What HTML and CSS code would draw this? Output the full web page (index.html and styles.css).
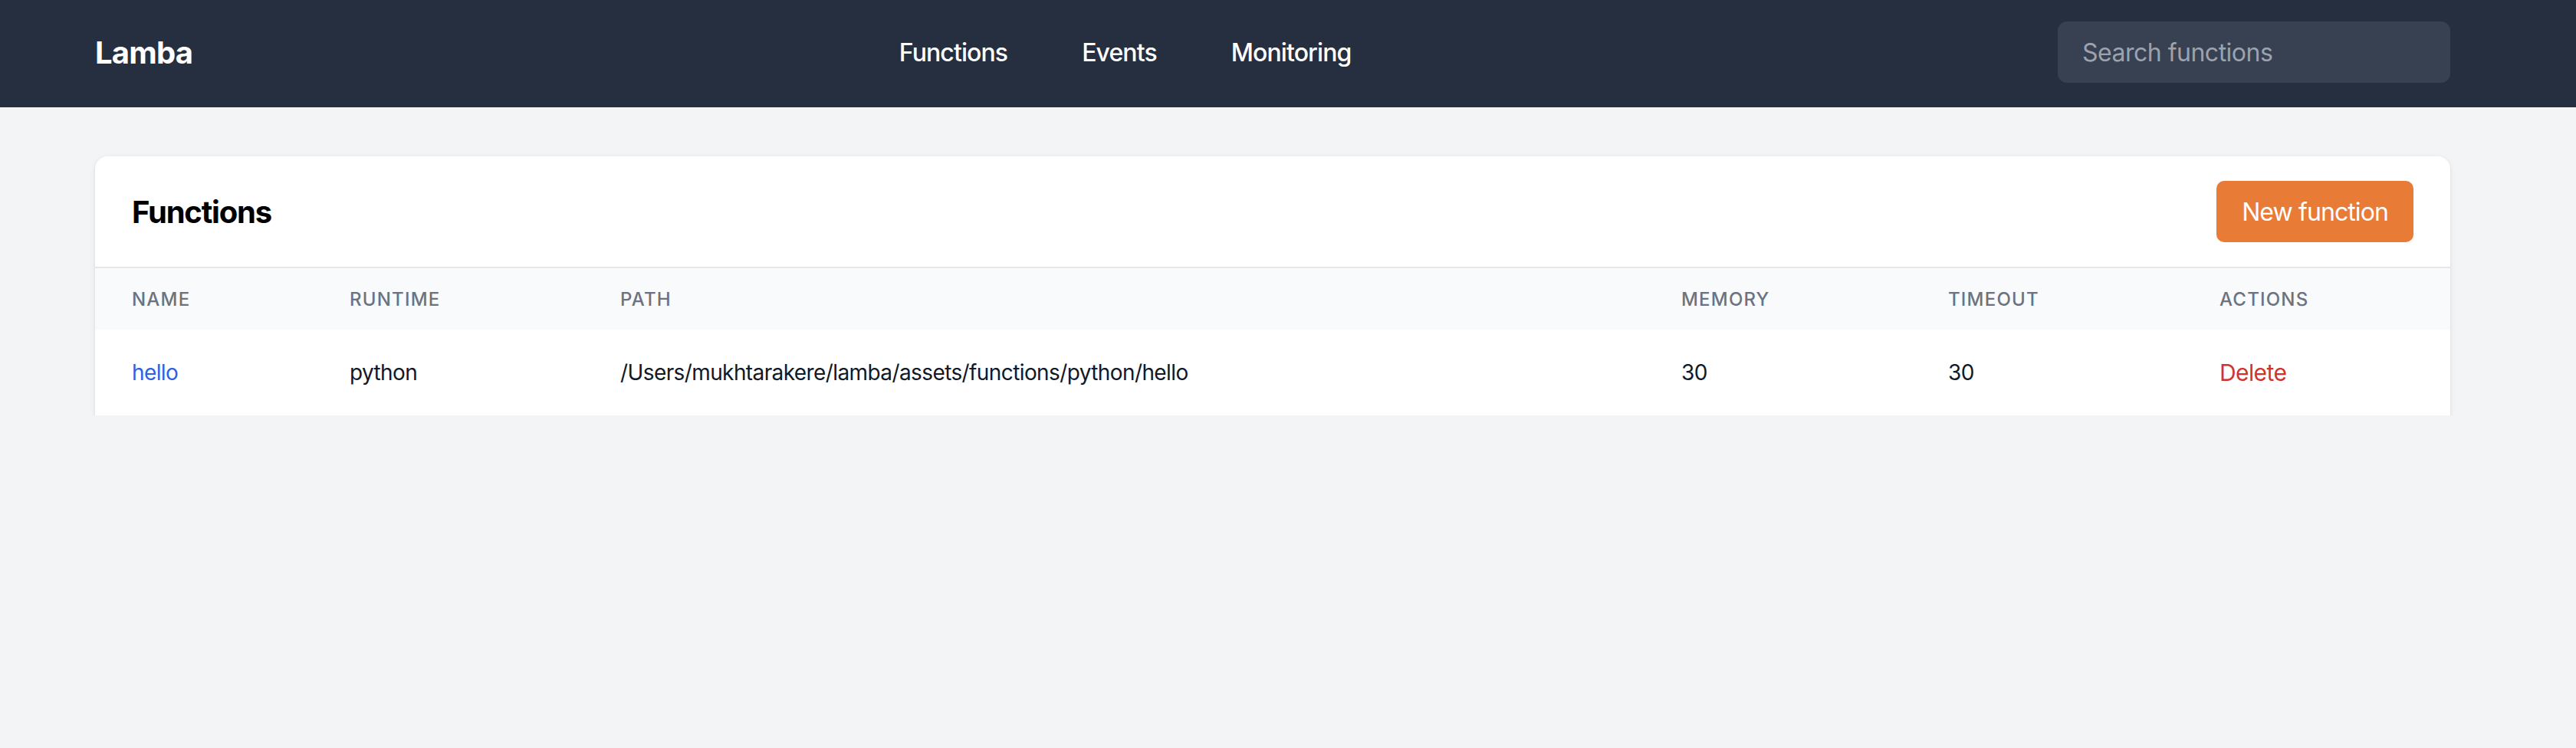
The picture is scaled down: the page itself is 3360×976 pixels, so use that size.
FILE: index.html
```html
<!DOCTYPE html>
<html lang="en">
<head>
<meta charset="utf-8">
<title>Lamba</title>
<link rel="stylesheet" href="styles.css">
</head>
<body>
<header class="topbar">
  <div class="container topbar-inner">
    <div class="logo">Lamba</div>
    <nav class="nav">
      <a href="#" class="nav-link">Functions</a>
      <a href="#" class="nav-link">Events</a>
      <a href="#" class="nav-link">Monitoring</a>
    </nav>
    <input class="search" type="text" placeholder="Search functions">
  </div>
</header>
<main class="main">
  <div class="container">
    <section class="card">
      <div class="card-header">
        <h1 class="card-title">Functions</h1>
        <button class="btn-primary">New function</button>
      </div>
      <table class="table">
        <colgroup>
          <col class="c-name"><col class="c-runtime"><col class="c-path"><col class="c-memory"><col class="c-timeout"><col class="c-actions">
        </colgroup>
        <thead>
          <tr>
            <th>Name</th>
            <th>Runtime</th>
            <th>Path</th>
            <th>Memory</th>
            <th>Timeout</th>
            <th>Actions</th>
          </tr>
        </thead>
        <tbody>
          <tr>
            <td><a href="#" class="fn-link">hello</a></td>
            <td>python</td>
            <td>/Users/mukhtarakere/lamba/assets/functions/python/hello</td>
            <td>30</td>
            <td>30</td>
            <td><a href="#" class="delete">Delete</a></td>
          </tr>
        </tbody>
      </table>
    </section>
  </div>
</main>
</body>
</html>
```

FILE: styles.css
```css
* { box-sizing: border-box; }

body {
  margin: 0;
  background: #f3f4f6;
  font-family: Inter, "Noto Sans", "Liberation Sans", sans-serif;
  color: #111827;
}

.container {
  width: 3072px;
  margin: 0 164px 0 124px;
}

.topbar {
  background: #252f3f;
  height: 140px;
}

.topbar-inner {
  height: 136px;
  display: flex;
  align-items: center;
  justify-content: space-between;
}

.logo {
  color: #ffffff;
  font-size: 40px;
  font-weight: 700;
  letter-spacing: -0.8px;
}

.nav {
  display: flex;
  gap: 97px;
}

.nav-link {
  color: #ffffff;
  text-decoration: none;
  font-size: 32px;
  font-weight: 500;
  letter-spacing: -0.9px;
}

.search {
  width: 512px;
  height: 80px;
  background: #374151;
  border: none;
  border-radius: 12px;
  padding: 0 32px;
  font-family: inherit;
  font-size: 32px;
  letter-spacing: -0.5px;
  color: #ffffff;
  outline: none;
}

.search::placeholder {
  color: #9ca3af;
}

.main {
  padding-top: 64px;
}

.card {
  background: #ffffff;
  border-radius: 16px 16px 0 0;
  box-shadow: 0 2px 6px rgba(0, 0, 0, 0.1), 0 1px 2px rgba(0, 0, 0, 0.06);
}

.card-header {
  display: flex;
  align-items: center;
  justify-content: space-between;
  padding: 32px 48px;
  border-bottom: 2px solid #e5e7eb;
}

.card-title {
  margin: 0;
  font-size: 40px;
  font-weight: 700;
  letter-spacing: -1.2px;
  color: #000000;
}

.btn-primary {
  height: 80px;
  padding: 0 33px;
  background: #e87b36;
  color: #ffffff;
  border: none;
  border-radius: 10px;
  font-family: inherit;
  font-size: 32px;
  font-weight: 400;
  letter-spacing: -0.9px;
}

.table {
  width: 100%;
  border-collapse: collapse;
  table-layout: fixed;
}

.c-name { width: 284px; }
.c-runtime { width: 353px; }
.c-path { width: 1384px; }
.c-memory { width: 348px; }
.c-timeout { width: 354px; }
.c-actions { width: 349px; }

.table thead tr {
  background: #f9fafb;
  height: 80px;
}

.table th {
  text-align: left;
  padding: 0 48px;
  font-size: 24px;
  font-weight: 500;
  color: #6b7280;
  text-transform: uppercase;
  letter-spacing: 1.2px;
}

.table tbody tr {
  height: 112px;
}

.table td {
  padding: 0 48px;
  font-size: 28px;
  color: #111827;
  letter-spacing: -0.6px;
  white-space: nowrap;
}

.fn-link {
  color: #2f5fe3;
  text-decoration: none;
}

.delete {
  color: #d0342c;
  text-decoration: none;
  font-size: 30px;
}
```
